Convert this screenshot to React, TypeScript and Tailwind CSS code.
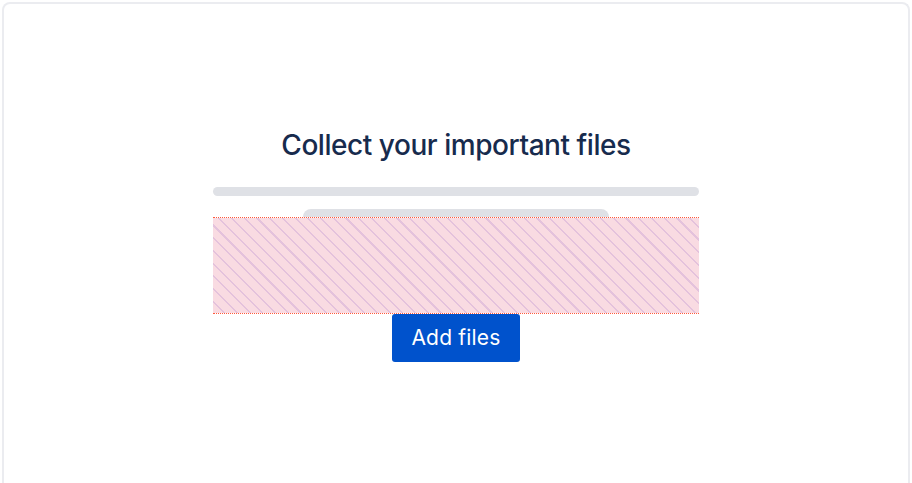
export default function App() {
  return (
    <div className="h-[483px] w-[912px] bg-white p-[2px] font-['Inter',sans-serif]">
      <div className="flex h-[481px] flex-col items-center rounded-t-lg border-2 border-b-0 border-[#ebecf0] bg-white pt-[121px]">
        <h1 className="text-[28px] font-medium leading-[40px] tracking-[-0.45px] text-[#172b4d]">
          Collect your important files
        </h1>
        <div className="mt-[22px] flex w-[486px] flex-col items-center">
          {/* skeleton lines */}
          <div className="h-[9px] w-full rounded-full bg-[#dfe1e6]" />
          <div className="mt-[13px] h-[8px] w-[306px] rounded-t-full bg-[#dfe1e6]" />
          {/* spacing overlay */}
          <div className="h-[97px] w-full border-t border-b border-dotted border-t-[#ff5a3c] border-b-[#ff5a3c] bg-[#f9dbe2] bg-[repeating-linear-gradient(45deg,transparent_0px,transparent_7.5px,#e4c2dc_7.5px,#e4c2dc_9px)] bg-clip-padding" />
          <button
            type="button"
            className="h-[48px] w-[128px] rounded-[3px] bg-[#0052cc] text-[21px] font-normal tracking-[0.2px] text-white"
          >
            Add files
          </button>
        </div>
      </div>
    </div>
  );
}
